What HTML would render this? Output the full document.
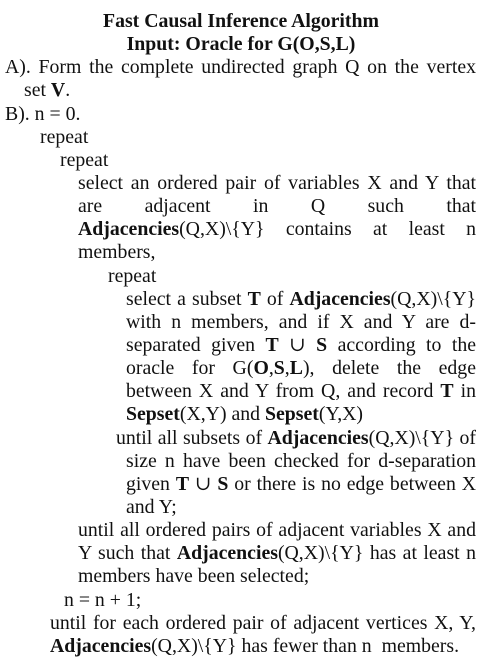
<!DOCTYPE html>
<html><head><meta charset="utf-8">
<style>
html,body{margin:0;padding:0;background:#fff;}
body{width:502px;height:652px;overflow:hidden;position:relative;font-family:"Liberation Serif","DejaVu Serif",serif;font-size:19.8px;color:#111;}
#c{position:absolute;top:10px;left:0;width:502px;line-height:23.15px;}
.l{white-space:nowrap;height:23.15px;}
.j{text-align:justify;text-align-last:justify;white-space:normal;overflow:hidden;}
.ctr{text-align:center;font-weight:bold;padding-right:20px;}
b{font-weight:bold;}
</style></head><body>
<div id="c">
<div class="l ctr">Fast Causal Inference Algorithm</div>
<div class="l ctr">Input: Oracle for G(O,S,L)</div>
<div class="l j" style="margin-left:5px;width:471px">A). Form the complete undirected graph Q on the vertex</div>
<div class="l" style="margin-left:24px">set <b>V</b>.</div>
<div class="l" style="margin-left:5px">B). n = 0.</div>
<div class="l" style="margin-left:40px">repeat</div>
<div class="l" style="margin-left:60px">repeat</div>
<div class="l j" style="margin-left:78px;width:398px">select an ordered pair of variables X and Y that</div>
<div class="l j" style="margin-left:78px;width:398px">are adjacent in Q such that</div>
<div class="l j" style="margin-left:78px;width:398px"><b>Adjacencies</b>(Q,X)\{Y} contains at least n</div>
<div class="l" style="margin-left:78px">members,</div>
<div class="l" style="margin-left:108px">repeat</div>
<div class="l j" style="margin-left:126px;width:350px">select a subset <b>T</b> of <b>Adjacencies</b>(Q,X)\{Y}</div>
<div class="l j" style="margin-left:126px;width:350px">with n members, and if X and Y are d-</div>
<div class="l j" style="margin-left:126px;width:350px">separated given <b>T</b> ∪ <b>S</b> according to the</div>
<div class="l j" style="margin-left:126px;width:350px">oracle for G(<b>O</b>,<b>S</b>,<b>L</b>), delete the edge</div>
<div class="l j" style="margin-left:126px;width:350px">between X and Y from Q, and record <b>T</b> in</div>
<div class="l" style="margin-left:126px"><b>Sepset</b>(X,Y) and <b>Sepset</b>(Y,X)</div>
<div class="l j" style="margin-left:116px;width:360px">until all subsets of <b>Adjacencies</b>(Q,X)\{Y} of</div>
<div class="l j" style="margin-left:126px;width:350px">size n have been checked for d-separation</div>
<div class="l j" style="margin-left:126px;width:350px">given <b>T</b> ∪ <b>S</b> or there is no edge between X</div>
<div class="l" style="margin-left:126px">and Y;</div>
<div class="l j" style="margin-left:78px;width:398px">until all ordered pairs of adjacent variables X and</div>
<div class="l j" style="margin-left:78px;width:398px">Y such that <b>Adjacencies</b>(Q,X)\{Y} has at least n</div>
<div class="l" style="margin-left:78px">members have been selected;</div>
<div class="l" style="margin-left:64px">n = n + 1;</div>
<div class="l j" style="margin-left:50px;width:426px">until for each ordered pair of adjacent vertices X, Y,</div>
<div class="l" style="margin-left:50px"><b>Adjacencies</b>(Q,X)\{Y} has fewer than n&nbsp; members.</div>
</div>
</body></html>
